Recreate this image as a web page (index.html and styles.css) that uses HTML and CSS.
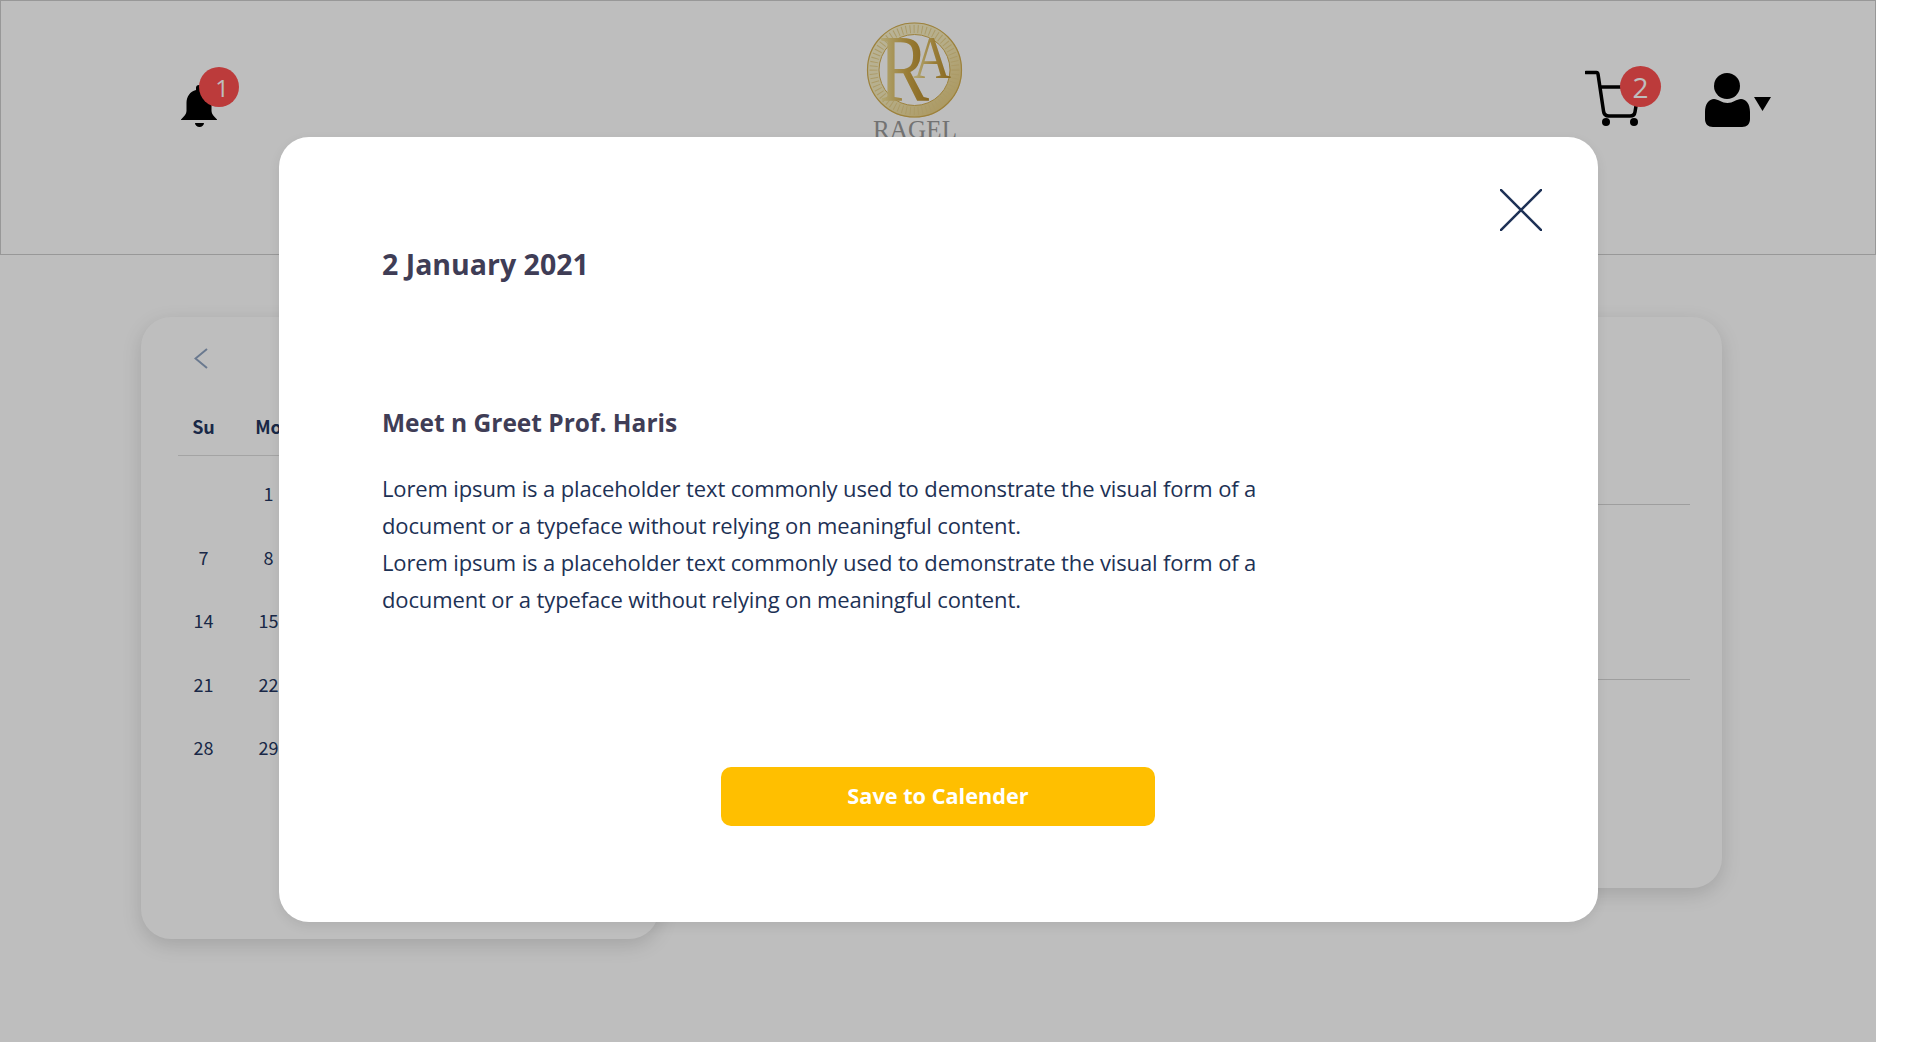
FILE: index.html
```html
<!DOCTYPE html>
<html lang="en">
  <head>
    <meta charset="UTF-8" />
    <meta name="viewport" content="width=device-width, initial-scale=1.0" />
    <title>Ragel Calendar</title>
    <link rel="stylesheet" href="styles.css">
  </head>
  <body>
    <div id="page">
      <header class="topbar">
        <div class="bell">
          <svg width="36" height="42" viewBox="0 0 36 42">
            <path d="M18 0a3 3 0 0 1 3 3v2c6 1.500 9.500 6.500 9.500 13v8c0 3 2.500 5.500 5.500 8.500v.500H0v-.500c3-3 5.500-5.500 5.500-8.500v-8c0-6.500 3.500-11.500 9.500-13V3a3 3 0 0 1 3-3z" />
            <path d="M14 38h9a4.500 4 0 0 1-9 0z" />
          </svg>
          <span class="badge badge-bell">1</span>
        </div>

        <svg class="logo" width="100" height="117" viewBox="0 0 100 117">
          <defs>
            <linearGradient id="gold" x1="0" y1="0" x2="1" y2="1">
              <stop offset="0" stop-color="#f9f2cf" />
              <stop offset="0.5" stop-color="#f4e9b8" />
              <stop offset="1" stop-color="#e4c878" />
            </linearGradient>
            <linearGradient id="letter" x1="0" y1="0" x2="1" y2="0">
              <stop offset="0" stop-color="#f3e6a4" />
              <stop offset="0.55" stop-color="#cfa94a" />
              <stop offset="1" stop-color="#b58a2c" />
            </linearGradient>
          </defs>
          <circle cx="49.500" cy="49" r="41.500" fill="none" stroke="url(#gold)" stroke-width="12" />
          <circle cx="49.500" cy="49" r="41" fill="none" stroke="#e6d08c" stroke-width="8" stroke-dasharray="1 3" />
          <circle cx="49.500" cy="49" r="47" fill="none" stroke="#d2ae52" stroke-width="1.200" />
          <circle cx="49.500" cy="49" r="35.500" fill="none" stroke="#d2ae52" stroke-width="1" />
          <text x="14" y="80" class="logo-r" textLength="50" lengthAdjust="spacingAndGlyphs">R</text>
          <text x="48" y="57" class="logo-a" textLength="38" lengthAdjust="spacingAndGlyphs">A</text>
          <text x="8" y="117" class="logo-name" textLength="84" lengthAdjust="spacing">RAGEL</text>
        </svg>

        <div class="cart">
          <svg width="55" height="60" viewBox="0 0 55 60">
            <path class="cart-line" d="M1 2.500H11.500Q12.700 2.500 13 4L18.500 41Q19 46 24 46H45Q49.500 46 50 42L51 36M15 17H40" />
            <circle cx="21" cy="52" r="4" />
            <circle cx="49" cy="52" r="4" />
          </svg>
          <span class="badge badge-cart">2</span>
        </div>

        <svg class="user" width="66" height="56" viewBox="0 0 66 56">
          <circle cx="22" cy="14" r="13" />
          <path d="M9 27c4 0 8 4 13.500 4s9-4 13.500-4c5 0 9 5 9 13v7c0 5-3 8-8 8H8c-5 0-8-3-8-8v-7c0-8 4-13 9-13z" />
          <path d="M49 25H66L57.500 39z" />
        </svg>
      </header>

      <main class="content">
        <section class="calendar">
          <svg class="prev" width="14" height="21" viewBox="0 0 14 21">
            <path d="M13 1L1.500 10.500L13 20" />
          </svg>
          <div class="weekdays">
            <span>Su</span><span>Mo</span><span>Tu</span><span>We</span><span>Th</span><span>Fr</span><span>Sa</span>
          </div>
          <div class="rule"></div>
          <div class="days">
            <span></span><span>1</span><span>2</span><span>3</span><span>4</span><span>5</span><span>6</span>
            <span>7</span><span>8</span><span>9</span><span>10</span><span>11</span><span>12</span><span>13</span>
            <span>14</span><span>15</span><span>16</span><span>17</span><span>18</span><span>19</span><span>20</span>
            <span>21</span><span>22</span><span>23</span><span>24</span><span>25</span><span>26</span><span>27</span>
            <span>28</span><span>29</span><span>30</span><span>31</span>
          </div>
        </section>

        <section class="events">
          <div class="event"></div>
          <div class="event"></div>
          <div class="event last"></div>
        </section>
      </main>

      <div class="overlay">
        <div class="modal">
          <svg class="close" width="42" height="42" viewBox="0 0 42 42">
            <path d="M0 0L42 42M42 0L0 42" />
          </svg>
          <h2>2 January 2021</h2>
          <h3>Meet n Greet Prof. Haris</h3>
          <p>Lorem ipsum is a placeholder text commonly used to demonstrate the visual form of a document or a typeface without relying on meaningful content.</p>
          <p>Lorem ipsum is a placeholder text commonly used to demonstrate the visual form of a document or a typeface without relying on meaningful content.</p>
          <button class="save">Save to Calender</button>
        </div>
      </div>
    </div>
  </body>
</html>
```

FILE: styles.css
```css
html,
body {
  margin: 0;
  padding: 0;
  background-color: #fff;
}

#page {
  position: relative;
  width: 1876px;
  height: 1042px;
  overflow: hidden;
  font-family: "Open Sans", sans-serif;
}

/* top bar */
.topbar {
  display: flex;
  align-items: flex-start;
  box-sizing: border-box;
  height: 255px;
  padding-left: 180px;
  background-color: #fff;
  border: 1px solid #cdcdcd;
}

.bell {
  position: relative;
  width: 36px;
  height: 42px;
  margin-top: 84px;
}

.bell svg,
.cart svg {
  display: block;
}

.badge {
  position: absolute;
  display: flex;
  align-items: center;
  justify-content: center;
  border-radius: 50%;
  background-color: #fc5050;
  color: #fff;
}

.badge-bell {
  top: -18px;
  left: 18px;
  box-sizing: border-box;
  width: 40px;
  height: 40px;
  padding-left: 6px;
  font-size: 24px;
}

.badge-cart {
  top: -4px;
  left: 35px;
  width: 41px;
  height: 41px;
  font-size: 28px;
}

.logo {
  margin: 20px 0 0 648px;
  overflow: hidden;
}

.logo-r {
  font-family: "Liberation Serif", serif;
  font-size: 96px;
  fill: url(#letter);
}

.logo-a {
  font-family: "Liberation Serif", serif;
  font-size: 62px;
  fill: url(#letter);
}

.logo-name {
  font-family: "Liberation Serif", serif;
  font-size: 25px;
  fill: #999;
}

.cart {
  position: relative;
  width: 55px;
  height: 60px;
  margin: 69px 0 0 620px;
}

.cart-line {
  fill: none;
  stroke: #000;
  stroke-width: 3.5;
  stroke-linecap: round;
}

.user {
  margin: 71px 0 0 65px;
}

/* page behind the dialog */
.content {
  display: flex;
  align-items: flex-start;
  gap: 40px;
  padding: 62px 154px 0 141px;
}

.calendar {
  box-sizing: border-box;
  width: 518px;
  height: 622px;
  padding: 31px 37px 0 30px;
  background-color: #fff;
  border-radius: 30px;
  box-shadow: 0 6px 20px rgba(0, 0, 0, 0.14);
  font-family: "Noto Sans CJK JP", sans-serif;
  color: #243660;
}

.prev {
  display: block;
  margin-left: 23px;
}

.prev path {
  fill: none;
  stroke: #8fa3c0;
  stroke-width: 2;
}

.weekdays,
.days {
  display: grid;
  grid-template-columns: repeat(7, 65px);
}

.weekdays {
  margin-top: 44px;
  font-size: 18px;
  font-weight: 700;
  line-height: 26px;
  text-align: center;
}

.rule {
  margin: 16px 0 0 7px;
  border-top: 1px solid #dcdcdc;
}

.days {
  grid-auto-rows: 63.600px;
  padding-top: 6px;
  font-size: 18px;
  line-height: 63.600px;
  text-align: center;
}

.events {
  box-sizing: border-box;
  flex: 1;
  height: 571px;
  padding: 0 32px;
  background-color: #fff;
  border-radius: 30px;
  box-shadow: 0 6px 20px rgba(0, 0, 0, 0.14);
}

.event {
  height: 174px;
  border-bottom: 1px solid #d4d4d4;
}

.event:first-child {
  height: 187px;
}

.event.last {
  border-bottom: 0;
}

/* dialog */
.overlay {
  position: absolute;
  top: 0;
  left: 0;
  box-sizing: border-box;
  display: flex;
  justify-content: center;
  width: 100%;
  height: 100%;
  padding-left: 1px;
  background-color: rgba(0, 0, 0, 0.255);
}

.modal {
  position: relative;
  box-sizing: border-box;
  display: flex;
  flex-direction: column;
  width: 1319px;
  height: 785px;
  margin-top: 137px;
  padding: 0 103px;
  background-color: #fff;
  border-radius: 30px;
  box-shadow: 0 4px 12px rgba(0, 0, 0, 0.08);
}

.close {
  position: absolute;
  top: 52px;
  right: 56px;
}

.close path {
  fill: none;
  stroke: #1d3155;
  stroke-width: 2.500;
}

.modal h2,
.modal h3 {
  margin: 0;
  color: #3f3d56;
  font-weight: 700;
}

.modal h2 {
  margin-top: 108px;
  font-size: 28.500px;
  line-height: 38px;
}

.modal h3 {
  margin-top: 123px;
  font-size: 24.500px;
  line-height: 34px;
}

.modal p {
  width: 890px;
  margin: 0;
  color: #1d3155;
  font-size: 22px;
  letter-spacing: -0.13px;
  line-height: 37px;
}

.modal h3 + p {
  margin-top: 30px;
}

.save {
  align-self: flex-start;
  width: 434px;
  height: 59px;
  margin: 149px 0 0 339px;
  padding: 0 0 2px;
  border: 0;
  border-radius: 10px;
  background-color: #ffbf00;
  color: #fff;
  font-family: "Open Sans", sans-serif;
  font-size: 21.700px;
  font-weight: 700;
}
```
